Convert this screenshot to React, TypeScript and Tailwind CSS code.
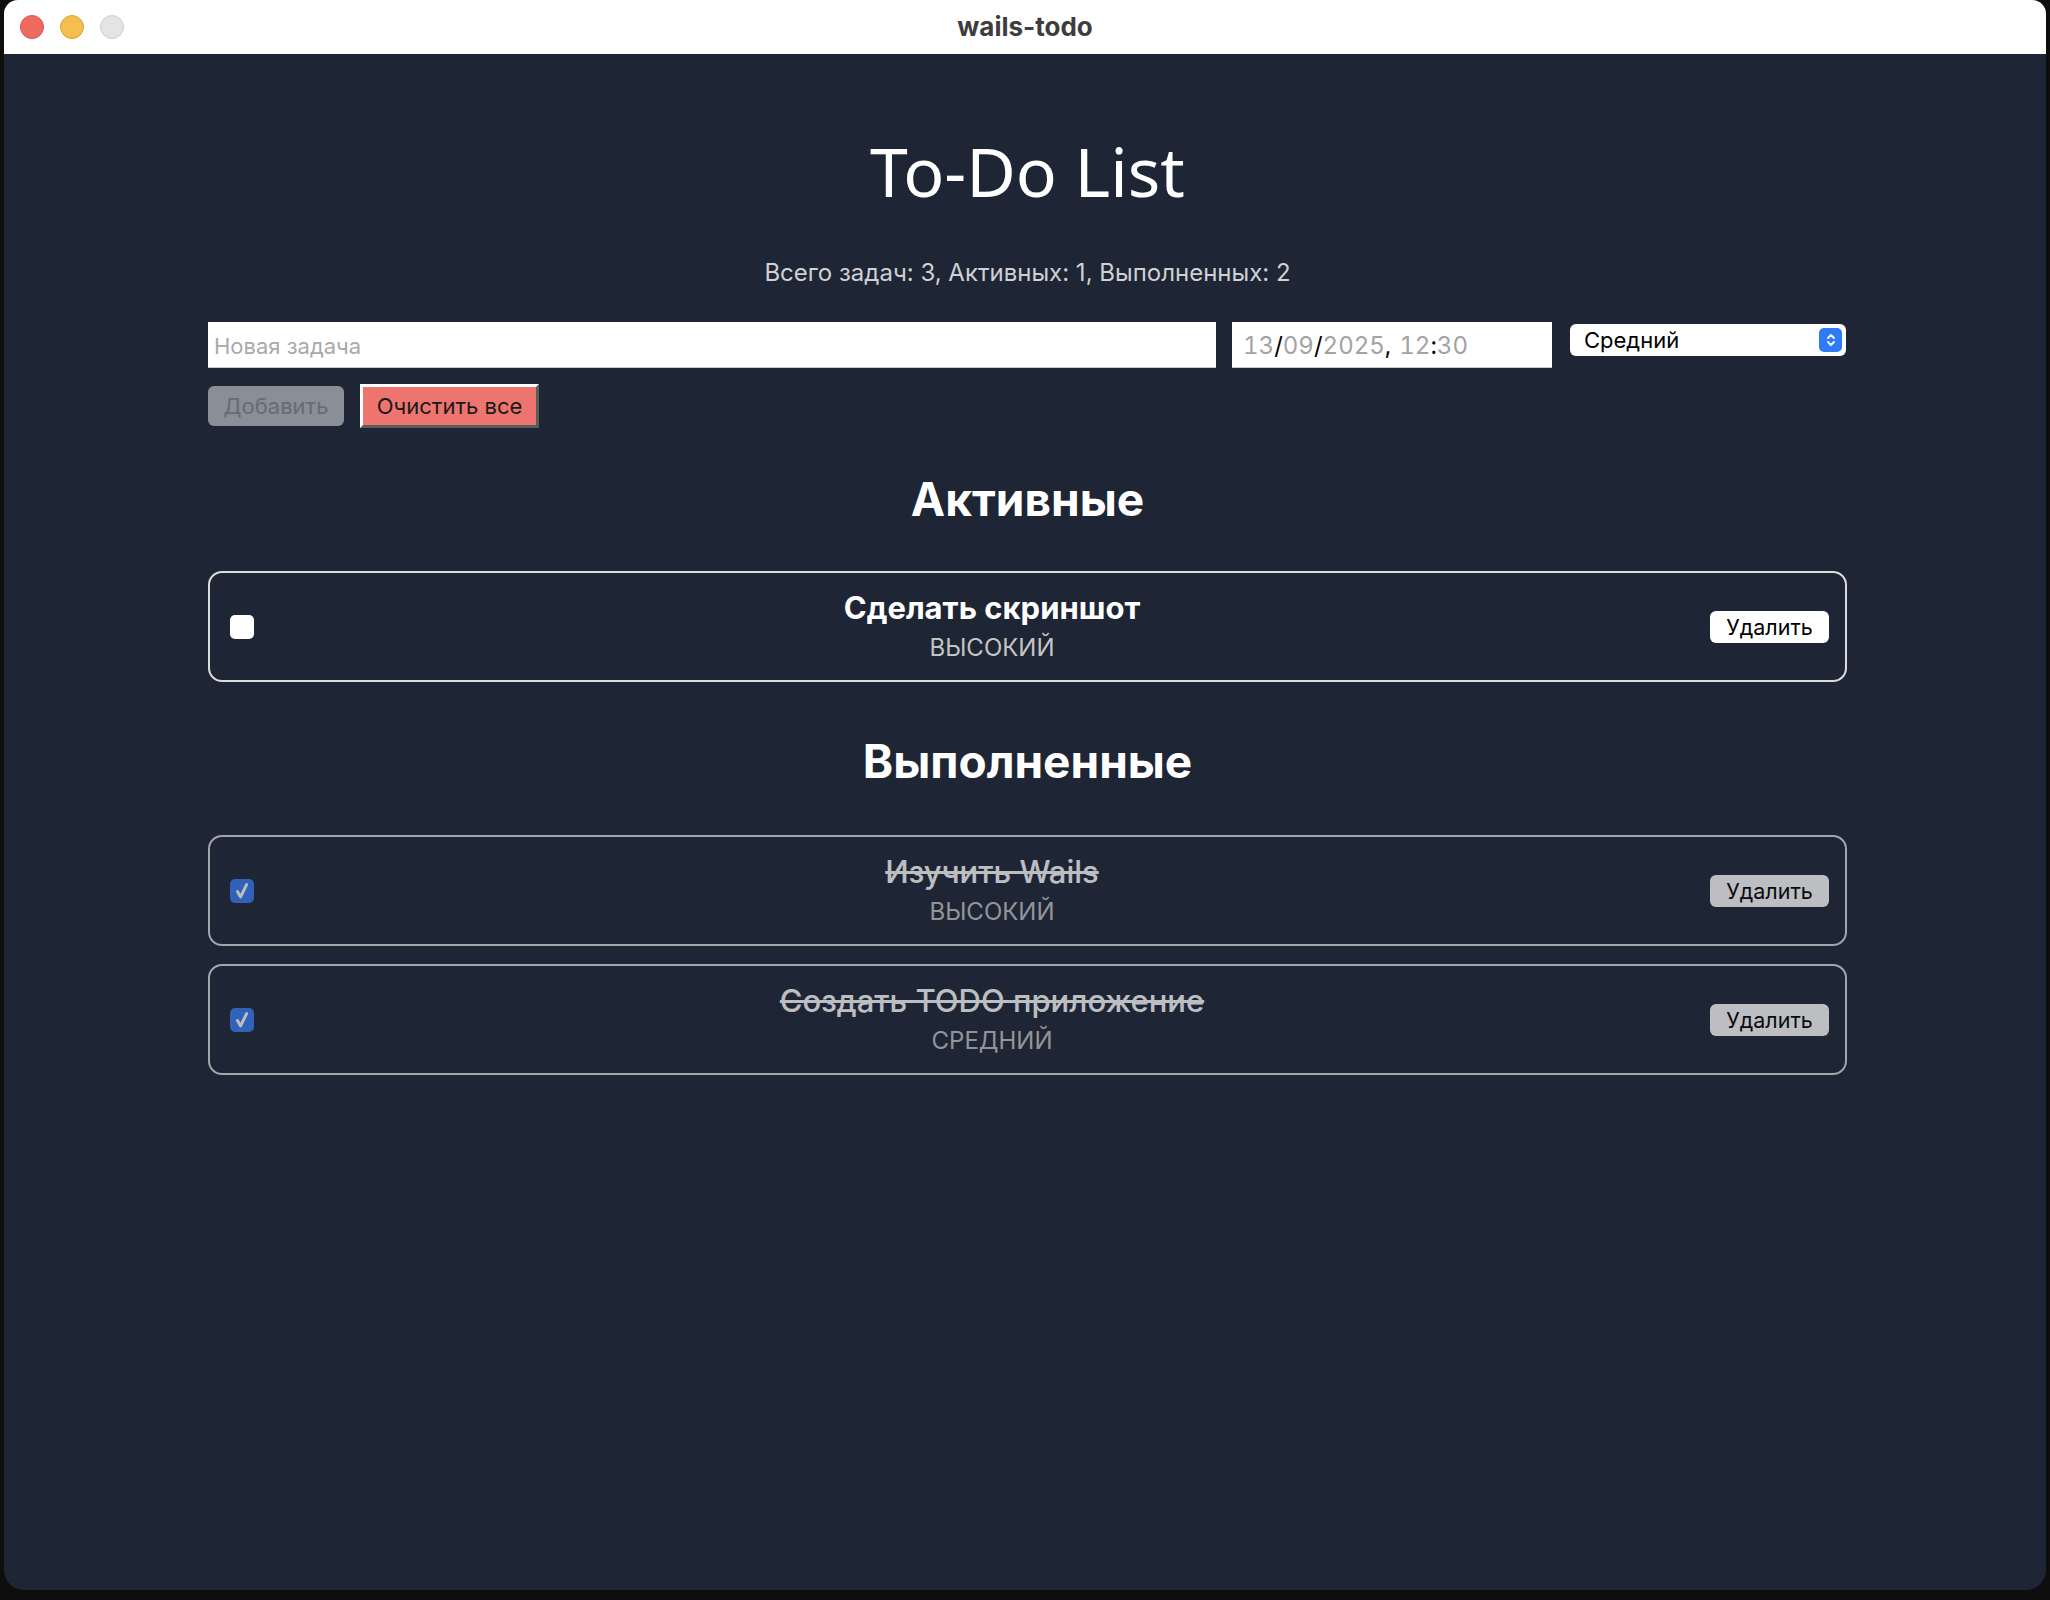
import { Fragment } from "react";

type Todo = { title: string; priority: string; done: boolean };

const todos: Todo[] = [
  { title: "Сделать скриншот", priority: "Высокий", done: false },
  { title: "Изучить Wails", priority: "Высокий", done: true },
  { title: "Создать TODO приложение", priority: "Средний", done: true },
];

const sans = "font-['Inter','Noto_Sans',sans-serif]";

function Checkbox({ checked }: { checked: boolean }) {
  if (!checked) {
    return <div className="mr-[20px] h-[24px] w-[24px] shrink-0 rounded-[5px] bg-white" />;
  }
  return (
    <div className="mr-[20px] flex h-[24px] w-[24px] shrink-0 items-center justify-center rounded-[5px] bg-[#3b7cf0]">
      <svg viewBox="0 0 24 24" className="h-[22px] w-[22px]" fill="none" stroke="white" strokeWidth="3.2" strokeLinecap="round" strokeLinejoin="round">
        <path d="M7 12.5l3.5 6L17 5" />
      </svg>
    </div>
  );
}

function TodoCard({ todo }: { todo: Todo }) {
  return (
    <div
      className={`flex h-[111px] items-center rounded-[14px] border-2 border-[#dcdcdc] pl-[20px] pr-[16px] ${
        todo.done ? "opacity-70" : ""
      }`}
    >
      <Checkbox checked={todo.done} />
      <div className={`flex flex-1 flex-col items-center pt-[3px] ${sans}`}>
        <div
          className={`text-[31px] leading-[38px] text-white ${
            todo.done ? "font-medium line-through" : "font-bold"
          }`}
        >
          {todo.title}
        </div>
        <div className="mt-[2px] text-[24px] uppercase leading-[38px] text-[#c4c4c4]">{todo.priority}</div>
      </div>
      <button className={`h-[32px] w-[119px] rounded-[6px] bg-white text-[21.5px] text-black ${sans}`}>
        Удалить
      </button>
    </div>
  );
}

export default function App() {
  const active = todos.filter((t) => !t.done);
  const done = todos.filter((t) => t.done);

  return (
    <div className="h-[1600px] w-full overflow-hidden bg-[#0e0e0e]">
      <div className="ml-[4px] flex h-[1590px] w-[2042px] flex-col overflow-hidden rounded-t-[14px] rounded-b-[20px] bg-[#1e2534]">
        {/* title bar */}
        <div className="grid h-[54px] shrink-0 grid-cols-[1fr_auto_1fr] items-center bg-white">
          <div className="flex gap-[16px] pl-[16px]">
            <span className="h-[24px] w-[24px] rounded-full border border-[#d9534a] bg-[#ee6a5f]" />
            <span className="h-[24px] w-[24px] rounded-full border border-[#d9a53a] bg-[#f5bf4f]" />
            <span className="h-[24px] w-[24px] rounded-full border border-[#cfcfcf] bg-[#e4e4e4]" />
          </div>
          <div className={`pb-[2px] text-[26px] font-bold text-[#3d3d3d] ${sans}`}>wails-todo</div>
          <div />
        </div>

        <div className="ml-[204px] w-[1639px]">
          <h1 className="pt-[77px] text-center font-['Noto_Sans',sans-serif] text-[68px] leading-[80px] text-white">
            To-Do List
          </h1>
          <p className={`mt-[46px] text-center text-[24px] leading-[32px] text-[#cfd1d4] ${sans}`}>
            Всего задач: 3, Активных: 1, Выполненных: 2
          </p>

          {/* new task form */}
          <div className="mt-[33px] flex items-start">
            <input
              placeholder="Новая задача"
              className={`h-[46px] w-[1008px] border-b border-[#c5c7cb] bg-white px-[6px] pt-[2px] text-[22px] text-black outline-none placeholder:text-[#a9a9a9] ${sans}`}
            />
            <div className={`ml-[16px] flex h-[46px] w-[320px] items-center border-b border-[#c5c7cb] bg-white pl-[11px] pt-[2px] text-[24px] tabular-nums text-[#a3a3a3] ${sans}`}>
              <span>13</span>
              <span className="text-black">/</span>
              <span>09</span>
              <span className="text-black">/</span>
              <span>2025</span>
              <span className="text-black">,</span>
              <span className="ml-[8px]">12</span>
              <span className="text-black">:</span>
              <span>30</span>
            </div>
            <div className={`ml-[18px] mt-[2px] flex h-[32px] w-[276px] items-center justify-between rounded-[6px] bg-white pl-[14px] pr-[4px] text-[22px] text-black ${sans}`}>
              <span>Средний</span>
              <span className="flex h-[24px] w-[23px] items-center justify-center rounded-[5px] bg-[#2f7bf5]">
                <svg viewBox="0 0 12 16" className="h-[16px] w-[12px]" fill="none" stroke="white" strokeWidth="1.8" strokeLinecap="round" strokeLinejoin="round">
                  <path d="M3 6l3-3 3 3M3 10l3 3 3-3" />
                </svg>
              </span>
            </div>
          </div>

          <div className={`mt-[16px] flex items-center gap-[16px] ${sans}`}>
            <button className="h-[40px] w-[136px] rounded-[6px] bg-[#8a8e96] text-[22px] text-[#676b73]">
              Добавить
            </button>
            <button className="h-[44px] w-[179px] border-[3px] border-b-[#5c5c5c] border-l-white border-r-[#5c5c5c] border-t-white bg-[#ee7470] text-[22px] text-[#1a1a1a]">
              Очистить все
            </button>
          </div>

          <h2 className={`mt-[41px] text-center text-[46px] font-bold leading-[60px] text-white ${sans}`}>Активные</h2>
          <div className="mt-[42px] flex flex-col gap-[18px]">
            {active.map((t) => (
              <Fragment key={t.title}>
                <TodoCard todo={t} />
              </Fragment>
            ))}
          </div>

          <h2 className={`mt-[49px] text-center text-[46px] font-bold leading-[60px] text-white ${sans}`}>Выполненные</h2>
          <div className="mt-[44px] flex flex-col gap-[18px]">
            {done.map((t) => (
              <TodoCard key={t.title} todo={t} />
            ))}
          </div>
        </div>
      </div>
    </div>
  );
}
